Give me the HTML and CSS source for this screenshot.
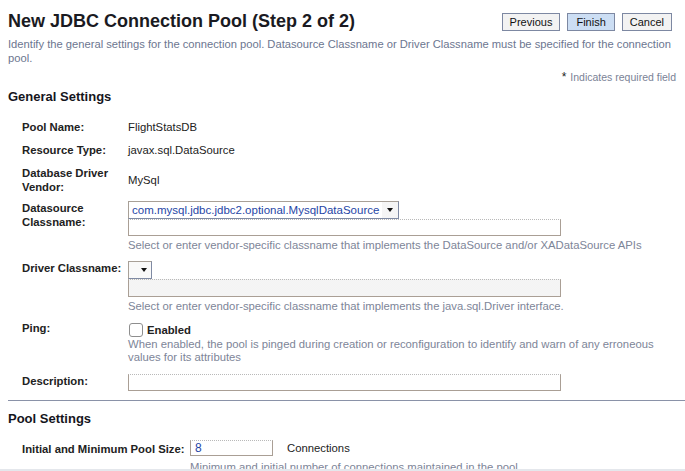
FILE: index.html
```html
<!DOCTYPE html>
<html>
<head>
<meta charset="utf-8">
<link rel="stylesheet" href="styles.css">
</head>
<body>
<div class="page">
  <div class="header">
    <h1 class="title">New JDBC Connection Pool (Step 2 of 2)</h1>
    <div class="buttons">
      <button class="btn">Previous</button>
      <button class="btn btn-primary">Finish</button>
      <button class="btn">Cancel</button>
    </div>
  </div>
  <p class="intro">Identify the general settings for the connection pool. Datasource Classname or Driver Classname must be specified for the connection pool.</p>
  <div class="required"><span class="star">*</span> Indicates required field</div>

  <h2 class="section">General Settings</h2>
  <div class="form">
    <div class="row row-a">
      <div class="label">Pool Name:</div>
      <div class="value">FlightStatsDB</div>
    </div>
    <div class="row row-a">
      <div class="label">Resource Type:</div>
      <div class="value">javax.sql.DataSource</div>
    </div>
    <div class="row row-b">
      <div class="label">Database Driver Vendor:</div>
      <div class="value value-mid">MySql</div>
    </div>
    <div class="row row-c">
      <div class="label">Datasource Classname:</div>
      <div class="value">
        <div class="select select-wide"><span class="select-text">com.mysql.jdbc.jdbc2.optional.MysqlDataSource</span><span class="select-arrow"><i class="tri"></i></span></div>
        <div class="textbox"></div>
        <div class="help">Select or enter vendor-specific classname that implements the DataSource and/or XADataSource APIs</div>
      </div>
    </div>
    <div class="row row-d">
      <div class="label">Driver Classname:</div>
      <div class="value">
        <div class="select select-empty"><span class="select-arrow"><i class="tri"></i></span></div>
        <div class="textbox textbox-disabled"></div>
        <div class="help">Select or enter vendor-specific classname that implements the java.sql.Driver interface.</div>
      </div>
    </div>
    <div class="row row-e">
      <div class="label">Ping:</div>
      <div class="value">
        <label class="check"><span class="checkbox"></span><span class="check-text">Enabled</span></label>
        <div class="help help-ping">When enabled, the pool is pinged during creation or reconfiguration to identify and warn of any erroneous values for its attributes</div>
      </div>
    </div>
    <div class="row row-f">
      <div class="label">Description:</div>
      <div class="value"><div class="textbox"></div></div>
    </div>
  </div>
  <div class="separator"></div>

  <h2 class="section section-pool">Pool Settings</h2>
  <div class="form form-pool">
    <div class="row row-pool">
      <div class="label">Initial and Minimum Pool Size:</div>
      <div class="value">
        <div class="inline">
          <div class="textbox textbox-small">8</div>
          <span class="unit">Connections</span>
        </div>
        <div class="help">Minimum and initial number of connections maintained in the pool</div>
      </div>
    </div>
  </div>
</div>
</body>
</html>
```

FILE: styles.css
```css
* { box-sizing: border-box; }
html, body { margin: 0; padding: 0; background: #fff; }
body {
  font-family: "Liberation Sans", Arial, sans-serif;
  font-size: 11.3px;
  color: #1e1e24;
}
.page {
  height: 471px;
  overflow: hidden;
  padding-left: 8px;
  border-bottom: 2px solid #e4e7ec;
}
.header {
  display: flex;
  justify-content: space-between;
  align-items: flex-start;
  padding-top: 10px;
  padding-right: 13px;
}
.title {
  margin: 0;
  font-size: 18px;
  line-height: 22px;
  font-weight: bold;
  color: #1a1a22;
}
.buttons {
  display: flex;
  gap: 7px;
  padding-top: 3px;
}
.btn {
  font-family: "Liberation Sans", Arial, sans-serif;
  font-size: 11px;
  height: 18px;
  padding: 0 7px;
  margin: 0;
  border: 1px solid #7d88a2;
  color: #111;
  background-color: #e2e4e6;
  background-image: radial-gradient(circle, #f4f4f4 0.7px, transparent 0.8px);
  background-size: 2px 2px;
  line-height: 16px;
}
.btn-primary {
  background-color: #a7c2e7;
  background-image: radial-gradient(circle, #cfe0f5 0.7px, transparent 0.8px);
  padding: 0 8px;
}
.intro {
  margin: 5px 13px 0 0;
  font-size: 11.2px;
  line-height: 14px;
  color: #6c7690;
}
.required {
  text-align: right;
  padding-right: 9px;
  margin-top: 5px;
  font-size: 10.5px;
  line-height: 14px;
  color: #7a8296;
}
.star { color: #222; font-size: 12px; margin-right: 1px; }
.section {
  margin: 5px 0 0 0;
  font-size: 13px;
  line-height: 16px;
  font-weight: bold;
  color: #15151c;
}
.form {
  padding-left: 14px;
  margin-top: 15px;
}
.row {
  display: grid;
  grid-template-columns: 106px 1fr;
  line-height: 14px;
}
.row-a { margin-bottom: 9px; }
.row-b { margin-bottom: 7px; }
.row-c { margin-bottom: 9px; }
.row-d { margin-bottom: 8px; }
.row-e { margin-bottom: 10px; }
.label {
  font-weight: bold;
  color: #222;
}
.value { color: #222; }
.value-mid { align-self: center; }
.select {
  display: flex;
  align-items: stretch;
  height: 18px;
  border: 1px solid #a8a097;
  border-right-color: #7f8aa3;
  border-bottom-color: #7f8aa3;
  background: #fff;
}
.select-wide { width: 271px; }
.select-text {
  flex: 1;
  color: #1f46a6;
  font-size: 11.5px;
  line-height: 16px;
  padding-left: 3px;
  white-space: nowrap;
}
.select-arrow {
  width: 16px;
  display: flex;
  align-items: center;
  justify-content: center;
  background-color: #e6e6e6;
  background-image: radial-gradient(circle, #f7f7f7 0.7px, transparent 0.8px);
  background-size: 2px 2px;
}
.select-empty {
  width: 24px;
  background-color: #ececec;
  background-image: radial-gradient(circle, #fafafa 0.7px, transparent 0.8px);
  background-size: 2px 2px;
}
.select-empty .select-arrow { width: 100%; justify-content: flex-end; padding-right: 4px; background: none; }
.tri {
  width: 0;
  height: 0;
  border-left: 3.5px solid transparent;
  border-right: 3.5px solid transparent;
  border-top: 4px solid #111;
}
.textbox {
  width: 433px;
  height: 17px;
  border: 1px solid #aa9f95;
  border-top: 1px dotted #b9b9b9;
  background: #fff;
}
.textbox-disabled {
  height: 18px;
  background-color: #e7e7e7;
  background-image: radial-gradient(circle, #f6f6f6 0.7px, transparent 0.8px);
  background-size: 2px 2px;
}
.help {
  margin-top: 2px;
  font-size: 11.3px;
  line-height: 14px;
  color: #7d8598;
}
.help-ping { margin-top: 1px; width: 540px; line-height: 13px; }
.check {
  display: flex;
  align-items: center;
  height: 15px;
  margin-top: 1px;
}
.checkbox {
  width: 14px;
  height: 14px;
  border: 1px solid #8e8e8e;
  border-radius: 3px;
  background: #fff;
  margin-left: 1px;
  margin-right: 4px;
}
.check-text { font-weight: bold; color: #222; }
.separator {
  height: 1px;
  background: #8a92a8;
  margin-top: 9px;
}
.section-pool { margin-top: 10px; }
.form-pool { margin-top: 13px; }
.row-pool { grid-template-columns: 168px auto; }
.row-pool .label { padding-top: 2px; }
.inline {
  display: flex;
  align-items: center;
}
.textbox-small {
  width: 83px;
  height: 16px;
  line-height: 14px;
  padding-left: 4px;
  color: #1f46a6;
  font-size: 12px;
}
.unit { margin-left: 14px; color: #222; }
.row-pool .help { margin-top: 4px; }
```
